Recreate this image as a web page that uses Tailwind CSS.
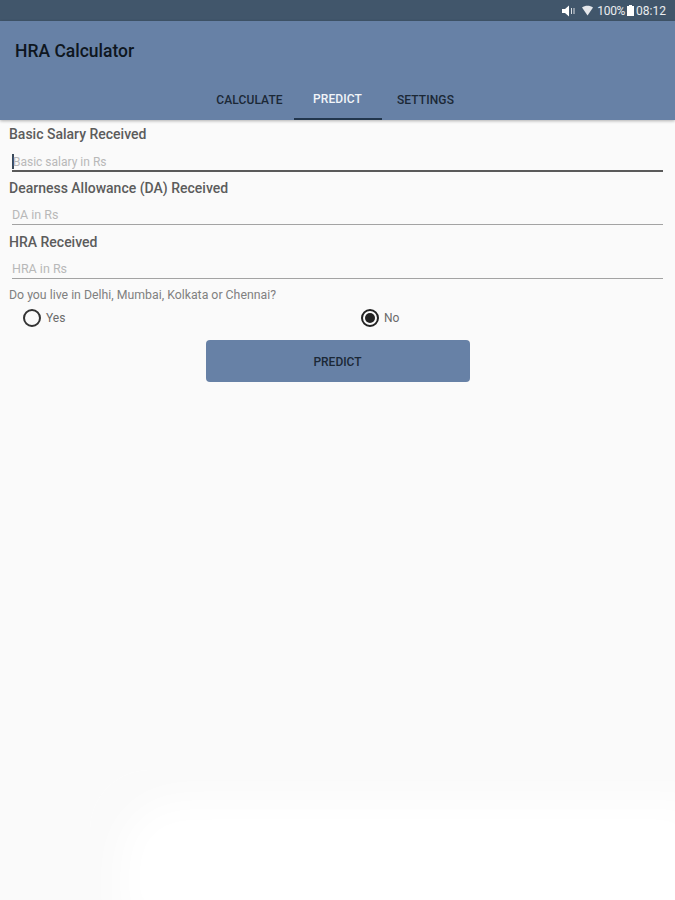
<!DOCTYPE html>
<html lang="en">
  <head>
    <meta charset="UTF-8" />
    <script src="https://cdn.jsdelivr.net/npm/@tailwindcss/browser@4"></script>
    <title>HRA Calculator</title>
  </head>
  <body class="relative h-[900px] w-[675px] overflow-hidden bg-[#fafafa] font-[Roboto,sans-serif]">
    <!-- status bar -->
    <div class="flex h-[21px] items-center justify-end bg-[#41566b] pr-[9px] text-[12px] text-white/90">
      <svg class="mr-[7px] h-[12px] w-[13px]" viewBox="0 0 13 12" fill="#fff">
        <path d="M0 4h3l4-3.500v11l-4-3.500h-3z" />
        <path d="M9 3h1v6h-1zM11.500 3h1v6h-1z" opacity=".8" />
      </svg>
      <svg class="mr-[4px] h-[11px] w-[11px]" viewBox="0 0 11 11" fill="#e5e7eb">
        <path d="M0 2.500c3-2.500 8-2.500 11 0l-5.500 8z" />
      </svg>
      <span class="tracking-[-0.3px]">100%</span>
      <svg class="mx-[2px] h-[11px] w-[7px]" viewBox="0 0 7 11" fill="#fff">
        <path d="M2 0h3v1h2v10h-7v-10h2z" />
      </svg>
      <span>08:12</span>
    </div>

    <!-- app bar -->
    <header class="relative h-[99px] bg-[#6781a6] shadow-[0_1px_3px_rgba(0,0,0,0.3)]">
      <h1 class="pl-[15px] pt-[20px] text-[17.500px] leading-[20px] font-medium text-[#0e1620]">HRA Calculator</h1>
      <nav class="absolute right-0 bottom-0 left-0 flex justify-center text-[12px] font-medium tracking-[0.1px]">
        <a class="flex h-[40px] w-[88px] items-center justify-center text-[#1b2836]">CALCULATE</a>
        <a class="flex h-[40px] w-[88px] items-center justify-center border-b-2 border-[#22364d] text-[#f2f5f9]">PREDICT</a>
        <a class="flex h-[40px] w-[88px] items-center justify-center text-[#1b2836]">SETTINGS</a>
      </nav>
    </header>

    <!-- leftover fade at the bottom of the screen -->
    <div class="absolute top-[770px] right-0 bottom-0 left-[90px] rounded-tl-[60px] bg-white shadow-[inset_30px_30px_40px_#fafafa]"></div>

    <main class="relative px-[9px]">
      <label class="block pt-[6px] text-[14px] leading-[16px] font-medium text-[#5c5c5c]">Basic Salary Received</label>
      <div class="mx-[3px] mt-[9px] flex h-[21px] items-center border-b-2 border-[#5a5a5a] pt-[2px] text-[12px] text-[#b8b8b8]">
        <span class="mr-[-1px] h-[15px] w-[2px] bg-[#3a4a5a]"></span>
        <span>Basic salary in Rs</span>
      </div>

      <label class="mt-[8px] block text-[14px] leading-[16px] font-medium text-[#5c5c5c]">Dearness Allowance (DA) Received</label>
      <div class="mx-[3px] mt-[8px] flex h-[21px] items-center border-b border-[#a3a3a3] pt-[2px] text-[12.500px] text-[#b8b8b8]">DA in Rs</div>

      <label class="mt-[9px] block text-[14px] leading-[16px] font-medium text-[#5c5c5c]">HRA Received</label>
      <div class="mx-[3px] mt-[8px] flex h-[21px] items-center border-b border-[#a3a3a3] pt-[2px] text-[12.500px] text-[#b8b8b8]">HRA in Rs</div>

      <p class="mt-[9px] text-[12.300px] leading-[14px] text-[#808080]">Do you live in Delhi, Mumbai, Kolkata or Chennai?</p>

      <div class="mt-[6px] flex h-[20px] items-center text-[12px] text-[#6a6a6a]">
        <div class="flex w-[338px] items-center pl-[14px]">
          <span class="h-[18px] w-[18px] rounded-full border-2 border-[#333]"></span>
          <span class="ml-[5px]">Yes</span>
        </div>
        <div class="flex items-center pl-[14px]">
          <span class="flex h-[18px] w-[18px] items-center justify-center rounded-full border-2 border-[#222]">
            <span class="h-[10px] w-[10px] rounded-full bg-[#222]"></span>
          </span>
          <span class="ml-[5px]">No</span>
        </div>
      </div>

      <button class="mx-auto mt-[12px] block h-[42px] w-[264px] rounded-[4px] bg-[#6781a6] pt-[2px] text-[12px] font-medium text-[#1b2836]">PREDICT</button>
    </main>
  </body>
</html>
